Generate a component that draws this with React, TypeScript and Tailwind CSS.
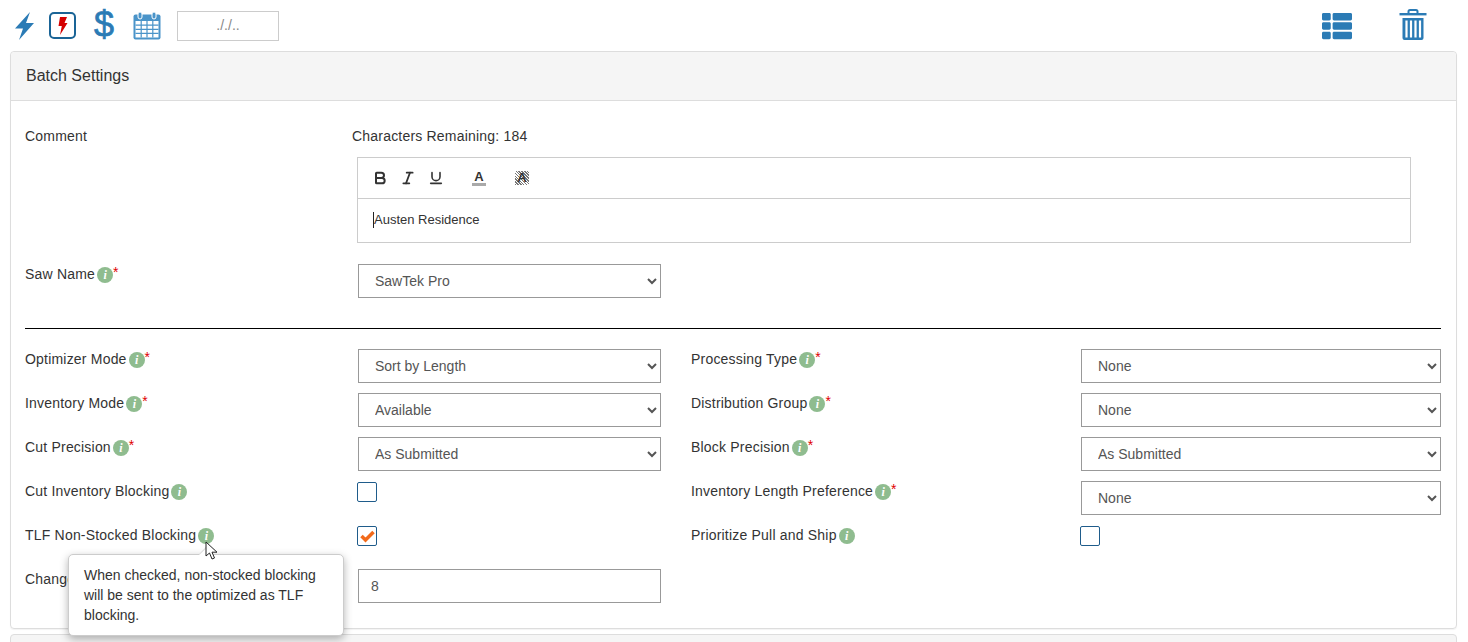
import React from "react";
import { FaThList } from "react-icons/fa";
import { Bold, Italic, Underline } from "lucide-react";

const blue = "#2b7bb5";

const InfoIcon = () => (
  <span className="relative top-[1px] ml-[2px] inline-flex h-4 w-4 shrink-0 items-center justify-center rounded-full bg-[#8fbc8f] font-['Liberation_Serif',serif] text-[12px] font-bold italic leading-none tracking-normal text-white">
    i
  </span>
);

const Label = ({ text, required }: { text: string; required?: boolean }) => (
  <div className="flex h-5 items-center whitespace-nowrap leading-5 tracking-[0.2px]">
    <span>{text}</span>
    <InfoIcon />
    {required && <span className="relative -top-[2px] text-[#e00000]">*</span>}
  </div>
);

const Select = ({ value }: { value: string }) => (
  <select
    defaultValue={value}
    className="h-[34px] w-full appearance-auto border border-[#999] bg-white pl-3 text-[14px] text-[#555]"
  >
    <option>{value}</option>
  </select>
);

const Checkbox = ({ checked }: { checked?: boolean }) => (
  <div className="ml-[-1px] mt-[1px] flex h-5 w-5 items-center justify-center rounded-[2px] border border-[#1f5c8b] bg-white">
    {checked && (
      <svg width="15" height="13" viewBox="0 0 15 13">
        <path d="M1.5 6 L5.5 10 L13.5 2" fill="none" stroke="#f26a1b" strokeWidth="3.5" />
      </svg>
    )}
  </div>
);

const BoltIcon = () => (
  <svg width="20" height="28" viewBox="0 0 20 28">
    <path d="M16 0L1 16.5H9L5 28L20 11H12Z" fill={blue} />
  </svg>
);

const CalendarIcon = () => (
  <svg width="28" height="28" viewBox="0 0 28 28">
    <rect x="0.5" y="2.5" width="27" height="25" rx="2" fill="#4a94c9" />
    <rect x="2.5" y="9" width="23" height="16.5" fill="#fff" />
    <path d="M2.5 13.2h23M2.5 17.3h23M2.5 21.4h23M8.2 9v16.5M14 9v16.5M19.8 9v16.5" stroke="#4a94c9" strokeWidth="1.2" />
    <rect x="5" y="0" width="4" height="7" rx="2" fill="#4a94c9" stroke="#fff" strokeWidth="1" />
    <rect x="19" y="0" width="4" height="7" rx="2" fill="#4a94c9" stroke="#fff" strokeWidth="1" />
  </svg>
);

const TrashIcon = () => (
  <svg width="28" height="32" viewBox="0 0 28 32">
    <path d="M9.5 4V2.5A1.5 1.5 0 0 1 11 1h6a1.5 1.5 0 0 1 1.5 1.5V4" fill="none" stroke={blue} strokeWidth="2" />
    <rect x="0.5" y="4" width="27" height="2.4" fill={blue} />
    <path d="M3.5 9H24.5V29a2 2 0 0 1-2 2H5.5a2 2 0 0 1-2-2Z" fill={blue} />
    <path d="M7.5 11.5v17M12 11.5v17M16.5 11.5v17M21 11.5v17" stroke="#fff" strokeWidth="2.2" />
  </svg>
);

const PowerBoxIcon = () => (
  <svg width="27" height="27" viewBox="0 0 27 27">
    <rect x="1" y="1" width="25" height="25" rx="4" fill="#fff" stroke="#1a6496" strokeWidth="2" />
    <path d="M11 5H18L15.5 11H18.5L11 23L12.8 14H9.5Z" fill="#d40000" />
  </svg>
);

const Cursor = () => (
  <svg width="14" height="20" viewBox="0 0 14 20" className="absolute left-[205px] top-[541px]">
    <path d="M1 1V15L4.5 12L7 18L9.5 17L7 11.2H12Z" fill="#fff" stroke="#222" strokeWidth="1" />
  </svg>
);

const Tooltip = () => (
  <div className="absolute left-[68px] top-[554px] h-[82px] w-[276px] rounded-[5px] border border-[#ccc] bg-white py-[10px] pl-[15px] pr-[14px] text-[14px] leading-5 text-[#333] shadow-[0_3px_8px_rgba(0,0,0,0.3)]">
    <div className="absolute -top-[6px] left-[132px] h-[10px] w-[10px] rotate-45 border-l border-t border-[#ddd] bg-white" />
    When checked, non-stocked blocking will be sent to the optimized as TLF blocking.
  </div>
);

export default function App() {
  return (
    <div className="relative h-[642px] overflow-hidden bg-white font-['Liberation_Sans',Arial,sans-serif] text-[14px] text-[#333]">
      <div className="flex h-[51px] items-center pl-[14px]">
        <BoltIcon />
        <div className="ml-[15px]">
          <PowerBoxIcon />
        </div>
        <span className="relative -top-[1px] ml-[18px] w-[19px] text-[36px] leading-[36px] text-[#2b7bb5] [-webkit-text-stroke:0.7px_#2b7bb5]">
          $
        </span>
        <div className="ml-[20px]">
          <CalendarIcon />
        </div>
        <div className="ml-4 flex h-[30px] w-[102px] items-center justify-center border border-[#ccc] text-[#888]">
          ././..
        </div>
        <FaThList size={30} color={blue} className="ml-auto" />
        <div className="ml-[47px] mr-[41px] -mt-[2px]">
          <TrashIcon />
        </div>
      </div>

      <div className="ml-[10px] mr-[11px] h-[578px] rounded-[4px] border border-[#ddd] shadow-[0_1px_1px_rgba(0,0,0,0.05)]">
        <div className="flex h-[49px] items-center rounded-t-[4px] border-b border-[#ddd] bg-[#f5f5f5] px-[15px] text-[16px]">
          Batch Settings
        </div>
        <div className="pl-[14px] pr-[15px] pt-[25px]">
          <div className="grid grid-cols-[327px_1fr] items-start">
            <div className="leading-5 tracking-[0.2px]">Comment</div>
            <div className="leading-5 tracking-[0.2px]">Characters Remaining: 184</div>
          </div>
          <div className="ml-[332px] mr-[30px] mt-[11px] h-[86px] border border-[#ccc]">
            <div className="flex h-[41px] items-center gap-[12px] border-b border-[#ccc] pl-[14px] text-[#333]">
              <Bold size={16} strokeWidth={3} />
              <Italic size={16} strokeWidth={2.6} />
              <Underline size={16} strokeWidth={2.4} />
              <span className="ml-[16px] flex w-[14px] flex-col items-center border-b-[3px] border-[#aaa] text-[13px] font-bold leading-[13px]">A</span>
              <span className="ml-[17px] w-[14px] bg-[repeating-linear-gradient(45deg,#777_0_1px,#fff_1px_2px)] text-center text-[13px] font-bold leading-[14px]">A</span>
            </div>
            <div className="flex h-[43px] items-center pb-[2px] pl-[15px] text-[13px]">
              <span className="border-l border-[#222] leading-4">Austen Residence</span>
            </div>
          </div>
          <div className="mt-[21px] grid grid-cols-[333px_303px]">
            <Label text="Saw Name" required />
            <Select value="SawTek Pro" />
          </div>
          <hr className="mb-5 mt-[30px] border-black" />
          <div className="grid grid-cols-[333px_303px_30px_390px_360px] gap-y-[10px] [grid-auto-rows:34px]">
            <Label text="Optimizer Mode" required />
            <Select value="Sort by Length" />
            <div />
            <Label text="Processing Type" required />
            <Select value="None" />

            <Label text="Inventory Mode" required />
            <Select value="Available" />
            <div />
            <Label text="Distribution Group" required />
            <Select value="None" />

            <Label text="Cut Precision" required />
            <Select value="As Submitted" />
            <div />
            <Label text="Block Precision" required />
            <Select value="As Submitted" />

            <Label text="Cut Inventory Blocking" />
            <Checkbox />
            <div />
            <Label text="Inventory Length Preference" required />
            <Select value="None" />

            <Label text="TLF Non-Stocked Blocking" />
            <Checkbox checked />
            <div />
            <Label text="Prioritize Pull and Ship" />
            <Checkbox />

            <div className="leading-5 tracking-[0.2px]">Change Count</div>
            <input
              defaultValue="8"
              className="h-[34px] w-full border border-[#999] bg-white pl-3 text-[14px] text-[#555]"
            />
          </div>
        </div>
      </div>

      <div className="ml-[10px] mr-[11px] mt-[5px] h-10 rounded-[4px] border border-[#ddd] bg-[#f5f5f5]" />

      <Tooltip />
      <Cursor />
    </div>
  );
}
